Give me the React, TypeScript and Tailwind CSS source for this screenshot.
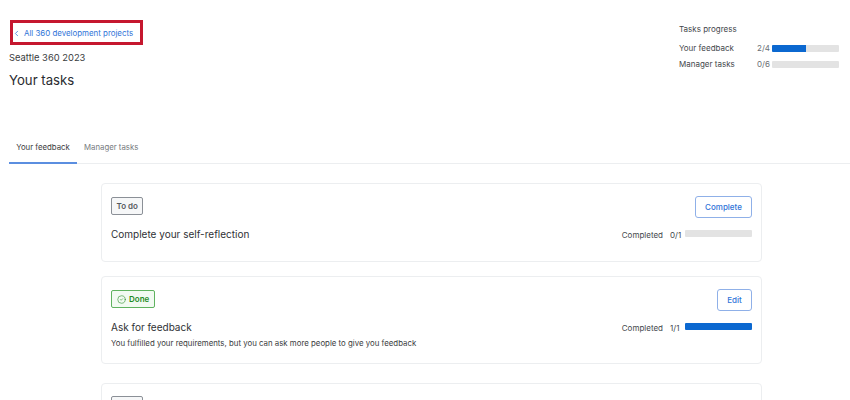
import { ChevronLeft, CircleCheck } from "lucide-react"

const font = "font-['Inter',sans-serif]"

const ProgressBar = ({ value, className }: { value: number; className: string }) => (
    <div className={`h-[7px] bg-[#e3e3e3] rounded-[1px] overflow-hidden ${className}`}>
        <div className="h-full bg-[#0b68d0]" style={{ width: `${value}%` }} />
    </div>
)

const Completed = ({ done, total }: { done: number; total: number }) => (
    <div className="flex items-center mt-px text-[8px] leading-3 text-[#44474c]">
        <span>Completed</span>
        <span className="ml-[7px] mr-[3px] w-[12px]">{done}/{total}</span>
        <ProgressBar value={(done / total) * 100} className="w-[67px] -mt-[2px]" />
    </div>
)

const SideProgress = ({ label, count, value }: { label: string; count: string; value: number }) => (
    <div className="flex items-center h-3 text-[8px] text-[#44474c]">
        <span className="w-[78px]">{label}</span>
        <span className="w-[15px] text-[#6b6f75]">{count}</span>
        <ProgressBar value={value} className="w-[67px]" />
    </div>
)

const TaskButton = ({ label, className }: { label: string; className: string }) => (
    <button className={`h-[22px] border border-[#8fb0e8] rounded-[3px] text-[8px] font-medium text-[#2f74d8] bg-white ${className}`}>
        {label}
    </button>
)

export default function App() {
    return (
        <div className={`h-[400px] w-[850px] overflow-hidden bg-white ${font}`}>
            <div className="flex justify-between h-[133px]">
                <div className="pl-[9px] pt-5">
                    <a className="flex items-center w-[133px] h-[25px] ml-px pt-[2px] border-[3px] border-[#c5172f] text-[7.9px] whitespace-nowrap text-[#2f74d8]">
                        <ChevronLeft className="w-[9px] h-[9px] shrink-0 -ml-px mr-[3px]" strokeWidth={2} />
                        <span>All 360 development projects</span>
                    </a>
                    <p className="mt-[5px] text-[9.4px] leading-4 text-[#3a3c40]">Seattle 360 2023</p>
                    <h1 className="mt-[4px] text-[13.2px] leading-5 text-[#2a2c30]">Your tasks</h1>
                </div>
                <div className="pt-[23px] pr-[10px] w-[171px]">
                    <p className="text-[8px] leading-3 text-[#44474c]">Tasks progress</p>
                    <div className="mt-[7px] flex flex-col gap-[4px]">
                        <SideProgress label="Your feedback" count="2/4" value={50} />
                        <SideProgress label="Manager tasks" count="0/6" value={0} />
                    </div>
                </div>
            </div>

            <div className="ml-[9px] h-[31px] flex border-b border-[#eceef0] text-[7.8px]">
                <div className="w-[68px] h-[31px] flex items-center justify-center border-b-2 border-[#5b8ee0] text-[#3a3c40]">Your feedback</div>
                <div className="ml-[7px] h-[30px] flex items-center text-[#777b80]">Manager tasks</div>
            </div>

            <div className="ml-[101px] w-[661px] mt-[19px] flex flex-col">
                <div className="h-[79px] border border-[#eceef0] rounded-[4px] pt-[12px] px-[9px]">
                    <div className="flex justify-between items-start">
                        <span className="mt-[1px] flex items-center h-[18px] px-[4.5px] border border-[#8b9097] rounded-[2px] bg-[#f6f7f8] text-[8px] font-semibold text-[#55585d]">To do</span>
                        <TaskButton label="Complete" className="w-[57px]" />
                    </div>
                    <div className="mt-[8px] flex justify-between items-center">
                        <span className="text-[10px] leading-4 text-[#2f3135]">Complete your self-reflection</span>
                        <Completed done={0} total={1} />
                    </div>
                </div>

                <div className="mt-[14px] h-[88px] border border-[#eceef0] rounded-[4px] pt-[12px] px-[9px]">
                    <div className="flex justify-between items-start">
                        <span className="mt-[1px] flex items-center h-[18px] px-[5px] gap-[3px] border border-[#5fb25f] rounded-[2px] bg-[#f2faf2] text-[8px] font-semibold text-[#1f8a1f]">
                            <CircleCheck className="w-[9px] h-[9px]" strokeWidth={1.5} />
                            Done
                        </span>
                        <TaskButton label="Edit" className="w-[35px]" />
                    </div>
                    <div className="mt-[8px] flex justify-between items-center">
                        <span className="text-[10px] leading-4 text-[#2f3135]">Ask for feedback</span>
                        <Completed done={1} total={1} />
                    </div>
                    <p className="mt-[2px] text-[7.85px] leading-3 text-[#3a3c40]">You fulfilled your requirements, but you can ask more people to give you feedback</p>
                </div>

                <div className="mt-[19px] h-[80px] border border-[#eceef0] rounded-[4px] pt-[12px] px-[9px]">
                    <span className="block w-[32px] h-[18px] border border-[#8b9097] rounded-[2px] bg-[#f6f7f8]" />
                </div>
            </div>
        </div>
    )
}
